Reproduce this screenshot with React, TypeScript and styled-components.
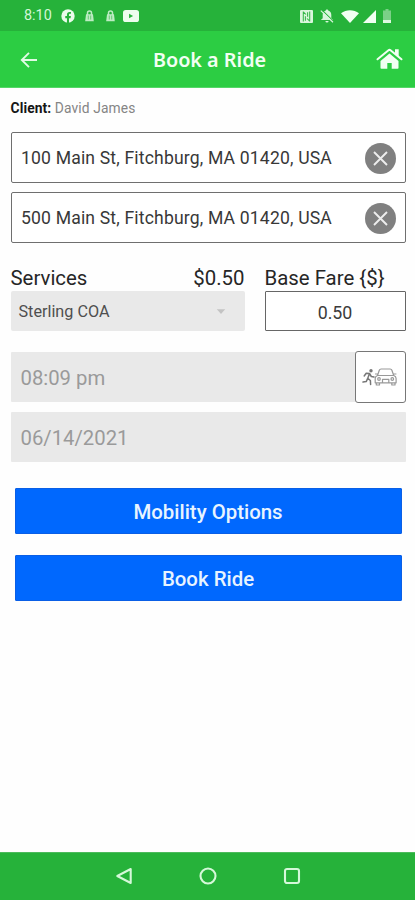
import React from 'react';
import styled, { createGlobalStyle } from 'styled-components';

const GlobalStyle = createGlobalStyle`
  * { box-sizing: border-box; }
  body { margin: 0; background: #fefefe; font-family: Roboto, sans-serif; }
  button, input { font: inherit; }
`;

const Screen = styled.div`
  width: 415px;
  height: 900px;
  display: flex;
  flex-direction: column;
  background: #fefefe;
  overflow: hidden;
`;

const StatusBar = styled.div`
  height: 31px;
  flex: none;
  display: flex;
  align-items: center;
  justify-content: space-between;
  padding: 1px 24px 0 24px;
  background: #26b23a;
`;

const StatusGroup = styled.div`
  display: flex;
  align-items: center;
`;

const StatusItem = styled.span<{ $before: number }>`
  display: flex;
  margin-left: ${(p) => p.$before}px;
`;

const Clock = styled.span`
  width: 28px;
  font-size: 14.4px;
  line-height: 16px;
  color: #d3f7d8;
  white-space: nowrap;
`;

const Header = styled.header`
  height: 57px;
  flex: none;
  display: grid;
  grid-template-columns: 60px 1fr 60px;
  align-items: center;
  background: #2ccd43;
  border-bottom: 1px solid #55d768;
`;

const Title = styled.h1`
  margin: 2px 0 0 4px;
  text-align: center;
  font-family: 'Noto Sans', sans-serif;
  font-size: 19.8px;
  line-height: 26px;
  font-weight: 600;
  color: #f2fff3;
`;

const IconButton = styled.button<{ $side: 'left' | 'right' }>`
  display: flex;
  justify-content: ${(p) => (p.$side === 'left' ? 'flex-start' : 'flex-end')};
  padding: ${(p) => (p.$side === 'left' ? '1px 0 0 19px' : '0 12px 0 0')};
  border: 0;
  background: none;
`;

const Content = styled.main`
  flex: 1;
  display: flex;
  flex-direction: column;
  padding: 12px 9.5px 0 10.5px;
`;

const Client = styled.div`
  height: 16px;
  font-size: 13.800px;
  line-height: 16px;
  letter-spacing: 0.12px;
  color: #858585;
  white-space: nowrap;
`;

const ClientLabel = styled.b`
  color: #161616;
  font-weight: 700;
  letter-spacing: 0.1px;
`;

const AddressField = styled.div`
  height: 51px;
  margin-bottom: 9px;
  display: flex;
  align-items: center;
  justify-content: space-between;
  padding: 1px 9px 0 9.5px;
  border: 1px solid #6f6f6f;
  border-radius: 2px;
  background: #fff;
`;

const AddressList = styled.div`
  margin-top: 16px;
`;

const AddressText = styled.span`
  font-size: 17.6px;
  line-height: 22px;
  letter-spacing: 0.16px;
  color: #383838;
  white-space: nowrap;
`;

const ClearButton = styled.button`
  display: flex;
  align-items: center;
  justify-content: center;
  width: 31px;
  height: 31px;
  padding: 0;
  border: 0;
  border-radius: 50%;
  background: #808080;
`;

const FareRow = styled.div`
  margin-top: 14px;
  display: grid;
  grid-template-columns: 234px 141px;
  column-gap: 20px;
`;

const FareLabels = styled.div`
  height: 25px;
  display: flex;
  justify-content: space-between;
  font-size: 20.4px;
  line-height: 25px;
  color: #262626;
  white-space: nowrap;
`;

const ServiceSelect = styled.div`
  height: 40px;
  display: flex;
  align-items: center;
  justify-content: space-between;
  padding: 1px 19px 0 8px;
  border-radius: 2px;
  background: #e9e9e9;
  font-size: 16.2px;
  color: #4f4f4f;
`;

const FareInput = styled.div`
  height: 40px;
  display: flex;
  align-items: center;
  justify-content: center;
  padding-top: 2px;
  border: 1px solid #666;
  border-radius: 1px;
  background: #fff;
  font-size: 17.8px;
  color: #3b3b3b;
`;

const ScheduleGroup = styled.div`
  margin-top: 21px;
  display: flex;
  flex-direction: column;
  gap: 10px;
`;

const ScheduleField = styled.div`
  height: 50px;
  display: flex;
  align-items: center;
  justify-content: space-between;
  padding-left: 10px;
  border-radius: 1px;
  background: #e9e9e9;
  color: #9a9a9a;
  font-size: 20.3px;
`;

const FieldText = styled.span`
  padding-top: 2px;
`;

const PickupButton = styled.button`
  width: 51px;
  height: 52px;
  flex: none;
  display: flex;
  align-items: center;
  justify-content: center;
  padding: 0;
  border: 1px solid #777;
  border-radius: 3px;
  background: #fff;
`;

const Actions = styled.div`
  margin: 26px 4px 0;
  display: flex;
  flex-direction: column;
  gap: 21px;
`;

const ActionButton = styled.button`
  height: 46px;
  padding: 2px 0 0;
  border: 1px solid #0a5fe6;
  border-radius: 1px;
  background: #0068fe;
  color: #e8f4ff;
  font-size: 20.4px;
  font-weight: 500;
`;

const NavBar = styled.nav`
  height: 48px;
  flex: none;
  display: flex;
  align-items: center;
  justify-content: center;
  gap: 66px;
  padding-bottom: 1px;
  border-top: 1px solid #4cbb5c;
  background: #26b23a;
`;

const FacebookIcon = () => (
  <svg width="14" height="14" viewBox="0 0 24 24">
    <circle cx="12" cy="12" r="11.500" fill="#e9fbea" />
    <path d="M10.200 24v-8.200H7.300v-3.600h2.900V9.700c0-3 1.700-4.600 4.400-4.600l2.500.2v3h-1.500c-1.400 0-1.900.9-1.900 1.800v2.100h3.300l-.6 3.600h-2.700V24z" fill="#26b23a" />
  </svg>
);

const BagIcon = () => (
  <svg width="9" height="12" viewBox="0 0 9 12">
    <path d="M2.500 5V3a2 2 0 0 1 4 0v2" fill="none" stroke="#bdecc3" strokeWidth="1.500" />
    <path d="M1 4.300h7l.8 6.900H.2z" fill="#bdecc3" />
    <path d="M3.300 5.500v4M5.700 5.500v4" stroke="#50c161" strokeWidth=".8" />
  </svg>
);

const YoutubeIcon = () => (
  <svg width="16" height="12" viewBox="0 0 15 12" preserveAspectRatio="none">
    <rect width="15" height="12" rx="2.600" fill="#edfdee" />
    <path d="M5.700 3.800v4.400L9.500 6z" fill="#26b23a" />
  </svg>
);

const NfcIcon = () => (
  <svg width="13" height="13" viewBox="0 0 13 13">
    <rect width="13" height="13" rx="1" fill="#d9f6dc" />
    <path d="M3.300 1.500v10M3.300 1.800 6 4.500M9.700 11.500v-10M9.700 11.200 7 8.500M5.400 6.200v4.600M7.600 6.800V2.200" fill="none" stroke="#35b748" strokeWidth="1.050" />
  </svg>
);

const MutedBellIcon = () => (
  <svg width="14" height="14" viewBox="0 0 14 14">
    <path d="M7 .4c-.8 0-1.200.5-1.200 1.200C3.500 2.300 2.700 4 2.700 6v3.200L.8 11h12.400l-1.900-1.800V6c0-2-.8-3.700-3.100-4.400C8.200.9 7.800.4 7 .4z" fill="#d9f6dc" />
    <path d="M5.400 12h3.200a1.600 1.600 0 0 1-3.200 0z" fill="#d9f6dc" />
    <path d="M2 1.200 13.700 12.400" stroke="#26b23a" strokeWidth="1.100" />
    <path d="M.8 1.600 13 13.300" stroke="#d9f6dc" strokeWidth="1.200" />
  </svg>
);

const WifiIcon = () => (
  <svg width="18" height="13" viewBox="0 0 18 13">
    <path d="M0 3.200C5.300-.9 12.700-.9 18 3.200L9 13z" fill="#f1fff2" />
  </svg>
);

const SignalIcon = () => (
  <svg width="13" height="13" viewBox="0 0 13 13">
    <path d="M13 0v13H0z" fill="#f1fff2" />
  </svg>
);

const BatteryIcon = () => (
  <svg width="8" height="14" viewBox="0 0 8 14">
    <path d="M2.500 0h3v1.500H8V14H0V1.500h2.500z" fill="#7bd087" />
    <path d="M0 11h8v3H0z" fill="#dff8e1" />
  </svg>
);

const BackArrow = () => (
  <svg width="20" height="18" viewBox="0 0 20 18">
    <path d="M18 9H3M10 1.800 2.800 9l7.200 7.200" fill="none" stroke="#e1fbe4" strokeWidth="1.900" />
  </svg>
);

const HomeIcon = () => (
  <svg width="27" height="22" viewBox="0 0 27 22">
    <path d="M13.500 5.600 4.500 13v7c0 .5.300.8.800.8h6V15h4.400v5.800h6c.5 0 .8-.3.800-.8v-7z" fill="#f1fff2" />
    <path d="m1.500 11.300 11-9c.6-.5 1.400-.5 2 0l11 9" fill="none" stroke="#f1fff2" strokeWidth="2" strokeLinecap="round" />
    <path d="M19 1.200h3.700v8L19 6z" fill="#f1fff2" />
  </svg>
);

const CrossIcon = () => (
  <svg width="17" height="17" viewBox="0 0 17 17">
    <path d="m2 2 13 13M15 2 2 15" stroke="#ededed" strokeWidth="1.900" />
  </svg>
);

const CaretIcon = () => (
  <svg width="10" height="6" viewBox="0 0 10 6">
    <path d="M.8.300h8.400L5 5z" fill="#c3c3c3" />
  </svg>
);

const WalkToCarIcon = () => (
  <svg width="36" height="20" viewBox="0 0 36 20">
    <circle cx="9" cy="3.700" r="1.700" fill="#777" />
    <path d="m2.200 9 2-2.700 3.300.2-1.800 4.900 2.700 2.100.2 4M5.700 11.400l-1.500 3.200-3.200.5M7.500 6.500l1.800 3 2.700.5" fill="none" stroke="#777" strokeWidth="1.500" strokeLinecap="round" strokeLinejoin="round" />
    <g fill="none" stroke="#999" strokeWidth="1.200" strokeLinejoin="round">
      <path d="m15.500 8.500 1.800-5.200c.3-.9.900-1.300 1.800-1.300h9c.9 0 1.500.4 1.800 1.300l1.800 5.200zM15.500 8.500c-1.600.5-2.300 1.500-2.300 3v4.300h20.900v-4.300c0-1.500-.8-2.500-2.400-3M14.300 15.800V18h3.200v-2.200M29.800 15.800V18H33v-2.200M13 7h2.700M31.700 7h2.700M20.500 15.500v-3.200h6.300v3.200" />
      <circle cx="17" cy="12" r="1.300" />
      <circle cx="30.300" cy="12" r="1.300" />
    </g>
  </svg>
);

const NavBack = () => (
  <svg width="18" height="18" viewBox="0 0 18 18">
    <path d="M15.700 2v14L2.300 9z" fill="none" stroke="#d5f8d9" strokeWidth="2.100" strokeLinejoin="round" />
  </svg>
);

const NavHome = () => (
  <svg width="18" height="18" viewBox="1 1 18 18">
    <circle cx="10" cy="10" r="7.500" fill="none" stroke="#d5f8d9" strokeWidth="2.100" />
  </svg>
);

const NavRecent = () => (
  <svg width="18" height="18" viewBox="0 0 18 18">
    <rect x="2" y="2" width="14" height="14" rx="2" fill="none" stroke="#d5f8d9" strokeWidth="2.100" />
  </svg>
);

const addresses = [
  '100 Main St, Fitchburg, MA 01420, USA',
  '500 Main St, Fitchburg, MA 01420, USA',
];

export default function App() {
  return (
    <Screen>
      <GlobalStyle />
      <StatusBar>
        <StatusGroup>
          <Clock>8:10</Clock>
          <StatusItem $before={9}><FacebookIcon /></StatusItem>
          <StatusItem $before={9.5}><BagIcon /></StatusItem>
          <StatusItem $before={12}><BagIcon /></StatusItem>
          <StatusItem $before={8.5}><YoutubeIcon /></StatusItem>
        </StatusGroup>
        <StatusGroup>
          <StatusItem $before={0}><NfcIcon /></StatusItem>
          <StatusItem $before={7}><MutedBellIcon /></StatusItem>
          <StatusItem $before={7}><WifiIcon /></StatusItem>
          <StatusItem $before={4}><SignalIcon /></StatusItem>
          <StatusItem $before={7}><BatteryIcon /></StatusItem>
        </StatusGroup>
      </StatusBar>
      <Header>
        <IconButton $side="left" aria-label="Back"><BackArrow /></IconButton>
        <Title>Book a Ride</Title>
        <IconButton $side="right" aria-label="Home"><HomeIcon /></IconButton>
      </Header>
      <Content>
        <Client><ClientLabel>Client:</ClientLabel> David James</Client>
        <AddressList>
          {addresses.map((address) => (
            <AddressField key={address}>
              <AddressText>{address}</AddressText>
              <ClearButton aria-label="Clear"><CrossIcon /></ClearButton>
            </AddressField>
          ))}
        </AddressList>
        <FareRow>
          <div>
            <FareLabels><span>Services</span><span>$0.50</span></FareLabels>
            <ServiceSelect><span>Sterling COA</span><CaretIcon /></ServiceSelect>
          </div>
          <div>
            <FareLabels><span>Base Fare {'{$}'}</span></FareLabels>
            <FareInput>0.50</FareInput>
          </div>
        </FareRow>
        <ScheduleGroup>
          <ScheduleField>
            <FieldText>08:09 pm</FieldText>
            <PickupButton aria-label="Pickup"><WalkToCarIcon /></PickupButton>
          </ScheduleField>
          <ScheduleField><FieldText>06/14/2021</FieldText></ScheduleField>
        </ScheduleGroup>
        <Actions>
          <ActionButton>Mobility Options</ActionButton>
          <ActionButton>Book Ride</ActionButton>
        </Actions>
      </Content>
      <NavBar>
        <NavBack />
        <NavHome />
        <NavRecent />
      </NavBar>
    </Screen>
  );
}
